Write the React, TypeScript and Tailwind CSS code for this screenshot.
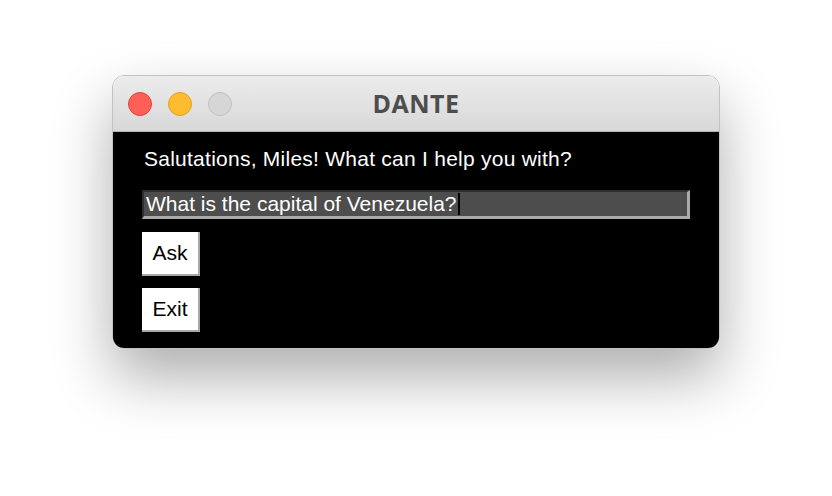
import React from "react";

const font = { fontFamily: '"Liberation Sans", Arial, sans-serif' };

const TkButton = ({ label }: { label: string }) => (
  <div
    className="w-[58px] h-[44px] bg-white border-r-2 border-b-2 border-[#a8a8a8] flex items-center justify-center text-[21px] text-black"
    style={font}
  >
    {label}
  </div>
);

export default function App() {
  return (
    <div className="w-[832px] h-[496px] bg-white pt-[75px] pl-[112px]">
      <div className="w-[608px] h-[274px] rounded-[12px] border border-[#c2c2c2] overflow-hidden flex flex-col shadow-[0_28px_60px_rgba(0,0,0,0.32)]">
        {/* title bar */}
        <div className="relative h-[56px] bg-gradient-to-b from-[#ececec] to-[#d8d8d8] border-b border-[#b3b3b3] flex items-center pl-[15px] gap-[16px]">
          <div className="w-[24px] h-[24px] rounded-full bg-[#fe5f57] border border-[#e0443e]" />
          <div className="w-[24px] h-[24px] rounded-full bg-[#febc2e] border border-[#dea123]" />
          <div className="w-[24px] h-[24px] rounded-full bg-[#d6d6d6] border border-[#c0c0c0]" />
          <div
            className="absolute inset-0 flex items-center justify-center text-[25px] font-bold text-[#4d4d4d] tracking-[0.5px]"
            style={{ fontFamily: '"Open Sans", "Liberation Sans", sans-serif' }}
          >
            DANTE
          </div>
        </div>
        {/* body */}
        <div className="flex-1 bg-black pl-[29px] pt-[15px] flex flex-col items-start">
          <div className="pl-[2px] text-white text-[21px] leading-[24px] tracking-[0.25px]" style={font}>
            Salutations, Miles! What can I help you with?
          </div>
          <div className="mt-[19px] w-[548px] h-[29px] bg-[#4d4d4d] border-t-2 border-l-2 border-[#2e2e2e] border-b-[3px] border-b-[#aaaaaa] border-r-[3px] border-r-[#aaaaaa] flex items-center pl-[2px]">
            <span className="text-white text-[21px] leading-[24px]" style={font}>
              What is the capital of Venezuela?
            </span>
            <span className="ml-[1px] w-[2px] h-[22px] bg-black" />
          </div>
          <div className="mt-[13px]">
            <TkButton label="Ask" />
          </div>
          <div className="mt-[12px]">
            <TkButton label="Exit" />
          </div>
        </div>
      </div>
    </div>
  );
}
